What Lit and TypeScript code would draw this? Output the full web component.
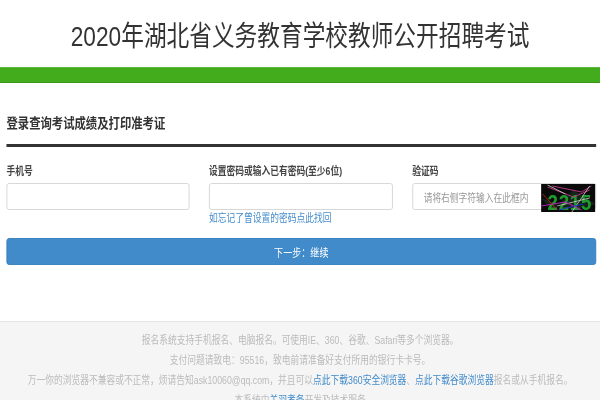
import { LitElement, html, css } from "lit";
import { customElement } from "lit/decorators.js";

@customElement("app-root")
export class AppRoot extends LitElement {
  static styles = css`
    :host {
      display: block;
      width: 600px;
      height: 400px;
      overflow: hidden;
      background: #fff;
    }
    .page {
      width: 741px;
      height: 400px;
      overflow: hidden;
      transform: scaleX(0.81);
      transform-origin: 0 0;
      font-family: "Liberation Sans", "Noto Sans CJK SC", sans-serif;
      color: #333;
      filter: blur(0.3px);
    }
    .title {
      height: 67px;
      display: flex;
      align-items: center;
      justify-content: center;
      font-size: 28px;
      font-weight: 400;
      margin: 0;
      color: #333;
    }
    .bar {
      height: 14px;
      background: #43ac1c;
      border-top: 1px solid #5cb83a;
      border-bottom: 1px solid #3a9a18;
    }
    .main {
      padding: 0 5px 0 8px;
    }
    .heading {
      margin: 0;
      height: 64px;
      box-sizing: border-box;
      padding-top: 31px;
      font-size: 14px;
      line-height: 18px;
      font-weight: 700;
      color: #333;
      border-bottom: 3px solid #333;
    }
    .fields {
      display: grid;
      grid-template-columns: 226px 227px 227px;
      column-gap: 24px;
      padding-top: 16px;
    }
    .label {
      font-size: 10.8px;
      font-weight: 700;
      line-height: 16px;
      margin-bottom: 4px;
      color: #444;
    }
    .input {
      box-sizing: border-box;
      height: 27px;
      border: 1px solid #d4d4d4;
      border-radius: 3px;
      background: #fff;
      display: flex;
      align-items: center;
    }
    .captcha-box {
      position: relative;
      padding-left: 13px;
      font-size: 10.8px;
      color: #999;
    }
    .captcha {
      position: absolute;
      right: 0;
      top: 0;
      width: 67px;
      height: 28px;
      display: block;
    }
    .link {
      color: #428bca;
      text-decoration: none;
    }
    .hint {
      font-size: 10.8px;
      line-height: 16px;
    }
    .btn {
      margin-top: 12px;
      height: 27px;
      border: 1px solid #357ebd;
      box-sizing: border-box;
      border-radius: 3px;
      background: #428bca;
      color: #fff;
      font-size: 11.2px;
      display: flex;
      align-items: center;
      justify-content: center;
    }
    .footer {
      margin-top: 56px;
      height: 100px;
      background: #f5f5f5;
      border-top: 1px solid #e5e5e5;
      padding-top: 8px;
      box-sizing: border-box;
      text-align: center;
      font-size: 10.8px;
      line-height: 20px;
      color: #bbb;
    }
    .footer p {
      margin: 0;
      white-space: nowrap;
    }
  `;

  render() {
    return html`
      <div class="page">
        <h1 class="title">2020年湖北省义务教育学校教师公开招聘考试</h1>
        <div class="bar"></div>
        <div class="main">
          <h2 class="heading">登录查询考试成绩及打印准考证</h2>
          <div class="fields">
            <div>
              <div class="label">手机号</div>
              <div class="input"></div>
            </div>
            <div>
              <div class="label">设置密码或输入已有密码(至少6位)</div>
              <div class="input"></div>
              <div class="hint"><a class="link">如忘记了曾设置的密码点此找回</a></div>
            </div>
            <div>
              <div class="label">验证码</div>
              <div class="input captcha-box">
                请将右侧字符输入在此框内
                <svg class="captcha" viewBox="0 0 67 28" preserveAspectRatio="none">
                  <rect width="67" height="28" fill="#0a0a0a" />
                  <path d="M0 14 L14 26 L40 6 L67 20 L40 26 Z" fill="#15251a" />
                  <text x="8" y="26" font-family="Liberation Sans, sans-serif" font-size="23" font-weight="700" fill="#1f9a2e" textLength="54">2215</text>
                  <path d="M8 3 L40 13 L60 6 M14 2 L50 8 L62 2" stroke="#c0398c" fill="none" stroke-width="1" />
                  <path d="M8 1 L30 10 M60 2 L38 28 M20 22 L60 14" stroke="#ddd" fill="none" stroke-width="0.8" />
                  <path d="M0 22 L30 18 L50 26" stroke="#b01fb0" fill="none" stroke-width="1.2" />
                  <path d="M22 26 L52 20" stroke="#2030c0" fill="none" stroke-width="1.2" />
                  <path d="M2 10 L20 26" stroke="#c02020" fill="none" stroke-width="1" />
                </svg>
              </div>
            </div>
          </div>
          <div class="btn">下一步：继续</div>
        </div>
        <div class="footer">
          <p>报名系统支持手机报名、电脑报名。可使用IE、360、谷歌、Safari等多个浏览器。</p>
          <p>支付问题请致电：95516，致电前请准备好支付所用的银行卡卡号。</p>
          <p>万一你的浏览器不兼容或不正常，烦请告知ask10060@qq.com，并且可以<a class="link">点此下载360安全浏览器</a>、<a class="link">点此下载谷歌浏览器</a>报名或从手机报名。</p>
          <p>本系统由<a class="link">关羽考务</a>开发及技术服务</p>
        </div>
      </div>
    `;
  }
}
